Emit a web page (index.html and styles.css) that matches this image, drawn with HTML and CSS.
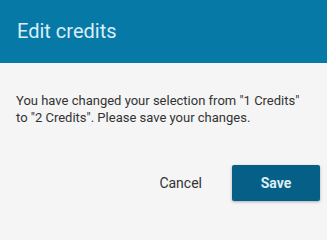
FILE: index.html
```html
<!DOCTYPE html>
<html>
<head>
<meta charset="utf-8">
<link rel="stylesheet" href="styles.css">
</head>
<body>
<div class="dialog">
  <div class="dialog-header">
    <h1 class="dialog-title">Edit credits</h1>
  </div>
  <div class="dialog-body">
    <p class="dialog-text">You have changed your selection from "1 Credits" to "2 Credits". Please save your changes.</p>
  </div>
  <div class="dialog-actions">
    <button class="btn btn-text">Cancel</button>
    <button class="btn btn-primary">Save</button>
  </div>
</div>
</body>
</html>
```
FILE: styles.css
```css
html, body {
  margin: 0;
  padding: 0;
  width: 327px;
  height: 207px;
  overflow: hidden;
  background: #f5f5f5;
  font-family: Roboto, "Liberation Sans", sans-serif;
}
.dialog {
  display: flex;
  flex-direction: column;
  height: 207px;
  background: #f5f5f5;
}
.dialog-header {
  height: 63px;
  background: #0779a6;
  display: flex;
  align-items: center;
  padding: 0 17px;
  box-sizing: border-box;
}
.dialog-title {
  margin: 0;
  font-size: 20px;
  font-weight: 400;
  color: #d9eef6;
  line-height: 24px;
  padding-bottom: 1px;
}
.dialog-body {
  padding: 29px 16px 0 16px;
}
.dialog-text {
  margin: 0;
  font-size: 13px;
  line-height: 17px;
  color: #333333;
}
.dialog-actions {
  margin-top: auto;
  display: flex;
  justify-content: flex-end;
  align-items: center;
  gap: 14px;
  padding: 0 7px 6px 0;
}
.btn {
  font-family: Roboto, "Liberation Sans", sans-serif;
  font-size: 14px;
  border: none;
  height: 36px;
  border-radius: 2px;
  cursor: pointer;
}
.btn-text {
  background: transparent;
  color: #333333;
  font-weight: 400;
  padding: 0 16px;
}
.btn-primary {
  width: 88px;
  background: #065f87;
  color: #dceef5;
  font-weight: 700;
  box-shadow: 0 1px 3px rgba(0, 0, 0, 0.3);
}
```
